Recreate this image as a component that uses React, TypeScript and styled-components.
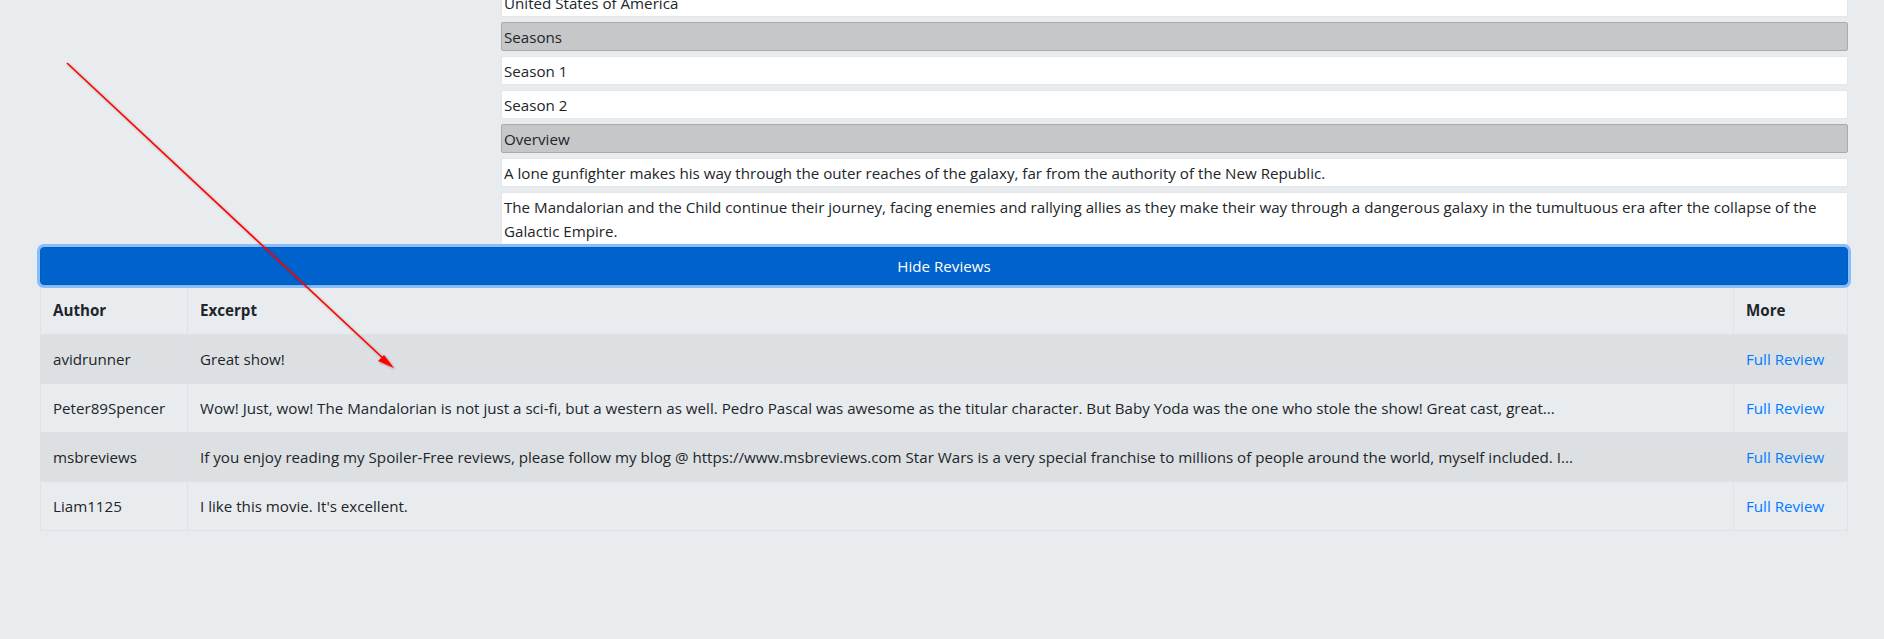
import React from "react";
import styled, { createGlobalStyle } from "styled-components";

const Global = createGlobalStyle`
  html, body { margin: 0; padding: 0; }
  body {
    background: #e9ecef;
    font-family: "Open Sans", "Noto Sans", sans-serif;
    font-size: 15.15px;
    color: #212529;
    overflow: hidden;
  }
`;

const Page = styled.div`
  position: relative;
  height: 639px;
  overflow: hidden;
  padding: 0 36px 0 40px;
`;

const Details = styled.section`
  display: grid;
  grid-template-columns: 461px 1fr;
  margin-top: -12px;
`;

const Poster = styled.div``;

const InfoList = styled.ul`
  list-style: none;
  margin: 0;
  padding: 0;
  display: flex;
  flex-direction: column;
  gap: 5px;
`;

const InfoItem = styled.li<{ $heading?: boolean }>`
  background: ${(p) => (p.$heading ? "#c6c7c9" : "#ffffff")};
  border: 1px solid ${(p) => (p.$heading ? "#a9aaac" : "#e4e6e8")};
  border-radius: 2px;
  padding: 2px 2px 1px;
  line-height: 24px;
`;

const ToggleButton = styled.button`
  display: block;
  width: 100%;
  height: 38px;
  margin-top: 2px;
  background: #0062cc;
  color: #ffffff;
  border: 1px solid #005cbf;
  border-radius: 4px;
  box-shadow: 0 0 0 3px rgba(38, 143, 255, 0.5);
  font-family: inherit;
  font-size: 15.15px;
  line-height: 24px;
  position: relative;
  z-index: 1;
`;

const Table = styled.table`
  width: 100%;
  table-layout: fixed;
  border-collapse: collapse;
  border: 1px solid #dee2e6;
`;

const Col = styled.col<{ $w?: number }>`
  ${(p) => (p.$w ? `width: ${p.$w}px;` : "")}
`;

const HeadCell = styled.th`
  text-align: left;
  font-weight: 700;
  padding: 12px;
  line-height: 24px;
  border: 1px solid #dee2e6;
  border-top-width: 0;
`;

const Row = styled.tr`
  &:nth-child(odd) {
    background: rgba(0, 0, 0, 0.05);
  }
`;

const Cell = styled.td`
  padding: 12px;
  line-height: 24px;
  border: 1px solid #dee2e6;
  white-space: nowrap;
  overflow: hidden;
`;

const Link = styled.a`
  color: #007bff;
  text-decoration: none;
`;

const Arrow = styled.svg`
  position: absolute;
  left: 0;
  top: 0;
  pointer-events: none;
  z-index: 5;
`;

const reviews = [
  { author: "avidrunner", excerpt: "Great show!" },
  {
    author: "Peter89Spencer",
    excerpt:
      "Wow! Just, wow! The Mandalorian is not just a sci-fi, but a western as well. Pedro Pascal was awesome as the titular character. But Baby Yoda was the one who stole the show! Great cast, great...",
  },
  {
    author: "msbreviews",
    excerpt:
      "If you enjoy reading my Spoiler-Free reviews, please follow my blog @ https://www.msbreviews.com Star Wars is a very special franchise to millions of people around the world, myself included. I...",
  },
  { author: "Liam1125", excerpt: "I like this movie. It's excellent." },
];

export default function App() {
  return (
    <>
      <Global />
      <Page>
        <Details>
          <Poster />
          <InfoList>
            <InfoItem>United States of America</InfoItem>
            <InfoItem $heading>Seasons</InfoItem>
            <InfoItem>Season 1</InfoItem>
            <InfoItem>Season 2</InfoItem>
            <InfoItem $heading>Overview</InfoItem>
            <InfoItem>
              A lone gunfighter makes his way through the outer reaches of the galaxy, far from the authority of the New Republic.
            </InfoItem>
            <InfoItem>
              The Mandalorian and the Child continue their journey, facing enemies and rallying allies as they make their way through a dangerous galaxy in the tumultuous era after the collapse of the Galactic Empire.
            </InfoItem>
          </InfoList>
        </Details>
        <ToggleButton>Hide Reviews</ToggleButton>
        <Table>
          <colgroup>
            <Col $w={147} />
            <Col />
            <Col $w={114} />
          </colgroup>
          <thead>
            <tr>
              <HeadCell>Author</HeadCell>
              <HeadCell>Excerpt</HeadCell>
              <HeadCell>More</HeadCell>
            </tr>
          </thead>
          <tbody>
            {reviews.map((r) => (
              <Row key={r.author}>
                <Cell>{r.author}</Cell>
                <Cell>{r.excerpt}</Cell>
                <Cell>
                  <Link href="#">Full Review</Link>
                </Cell>
              </Row>
            ))}
          </tbody>
        </Table>
        <Arrow width="1884" height="639" viewBox="0 0 1884 639">
          <defs>
            <filter id="sh" x="-50%" y="-50%" width="200%" height="200%">
              <feDropShadow dx="1" dy="1" stdDeviation="1" floodColor="#000" floodOpacity="0.35" />
            </filter>
          </defs>
          <g filter="url(#sh)">
            <line x1="67" y1="63" x2="386" y2="361" stroke="#ff0000" strokeWidth="1.6" />
            <polygon points="394,368 378,361 384,355" fill="#ff0000" />
          </g>
        </Arrow>
      </Page>
    </>
  );
}
